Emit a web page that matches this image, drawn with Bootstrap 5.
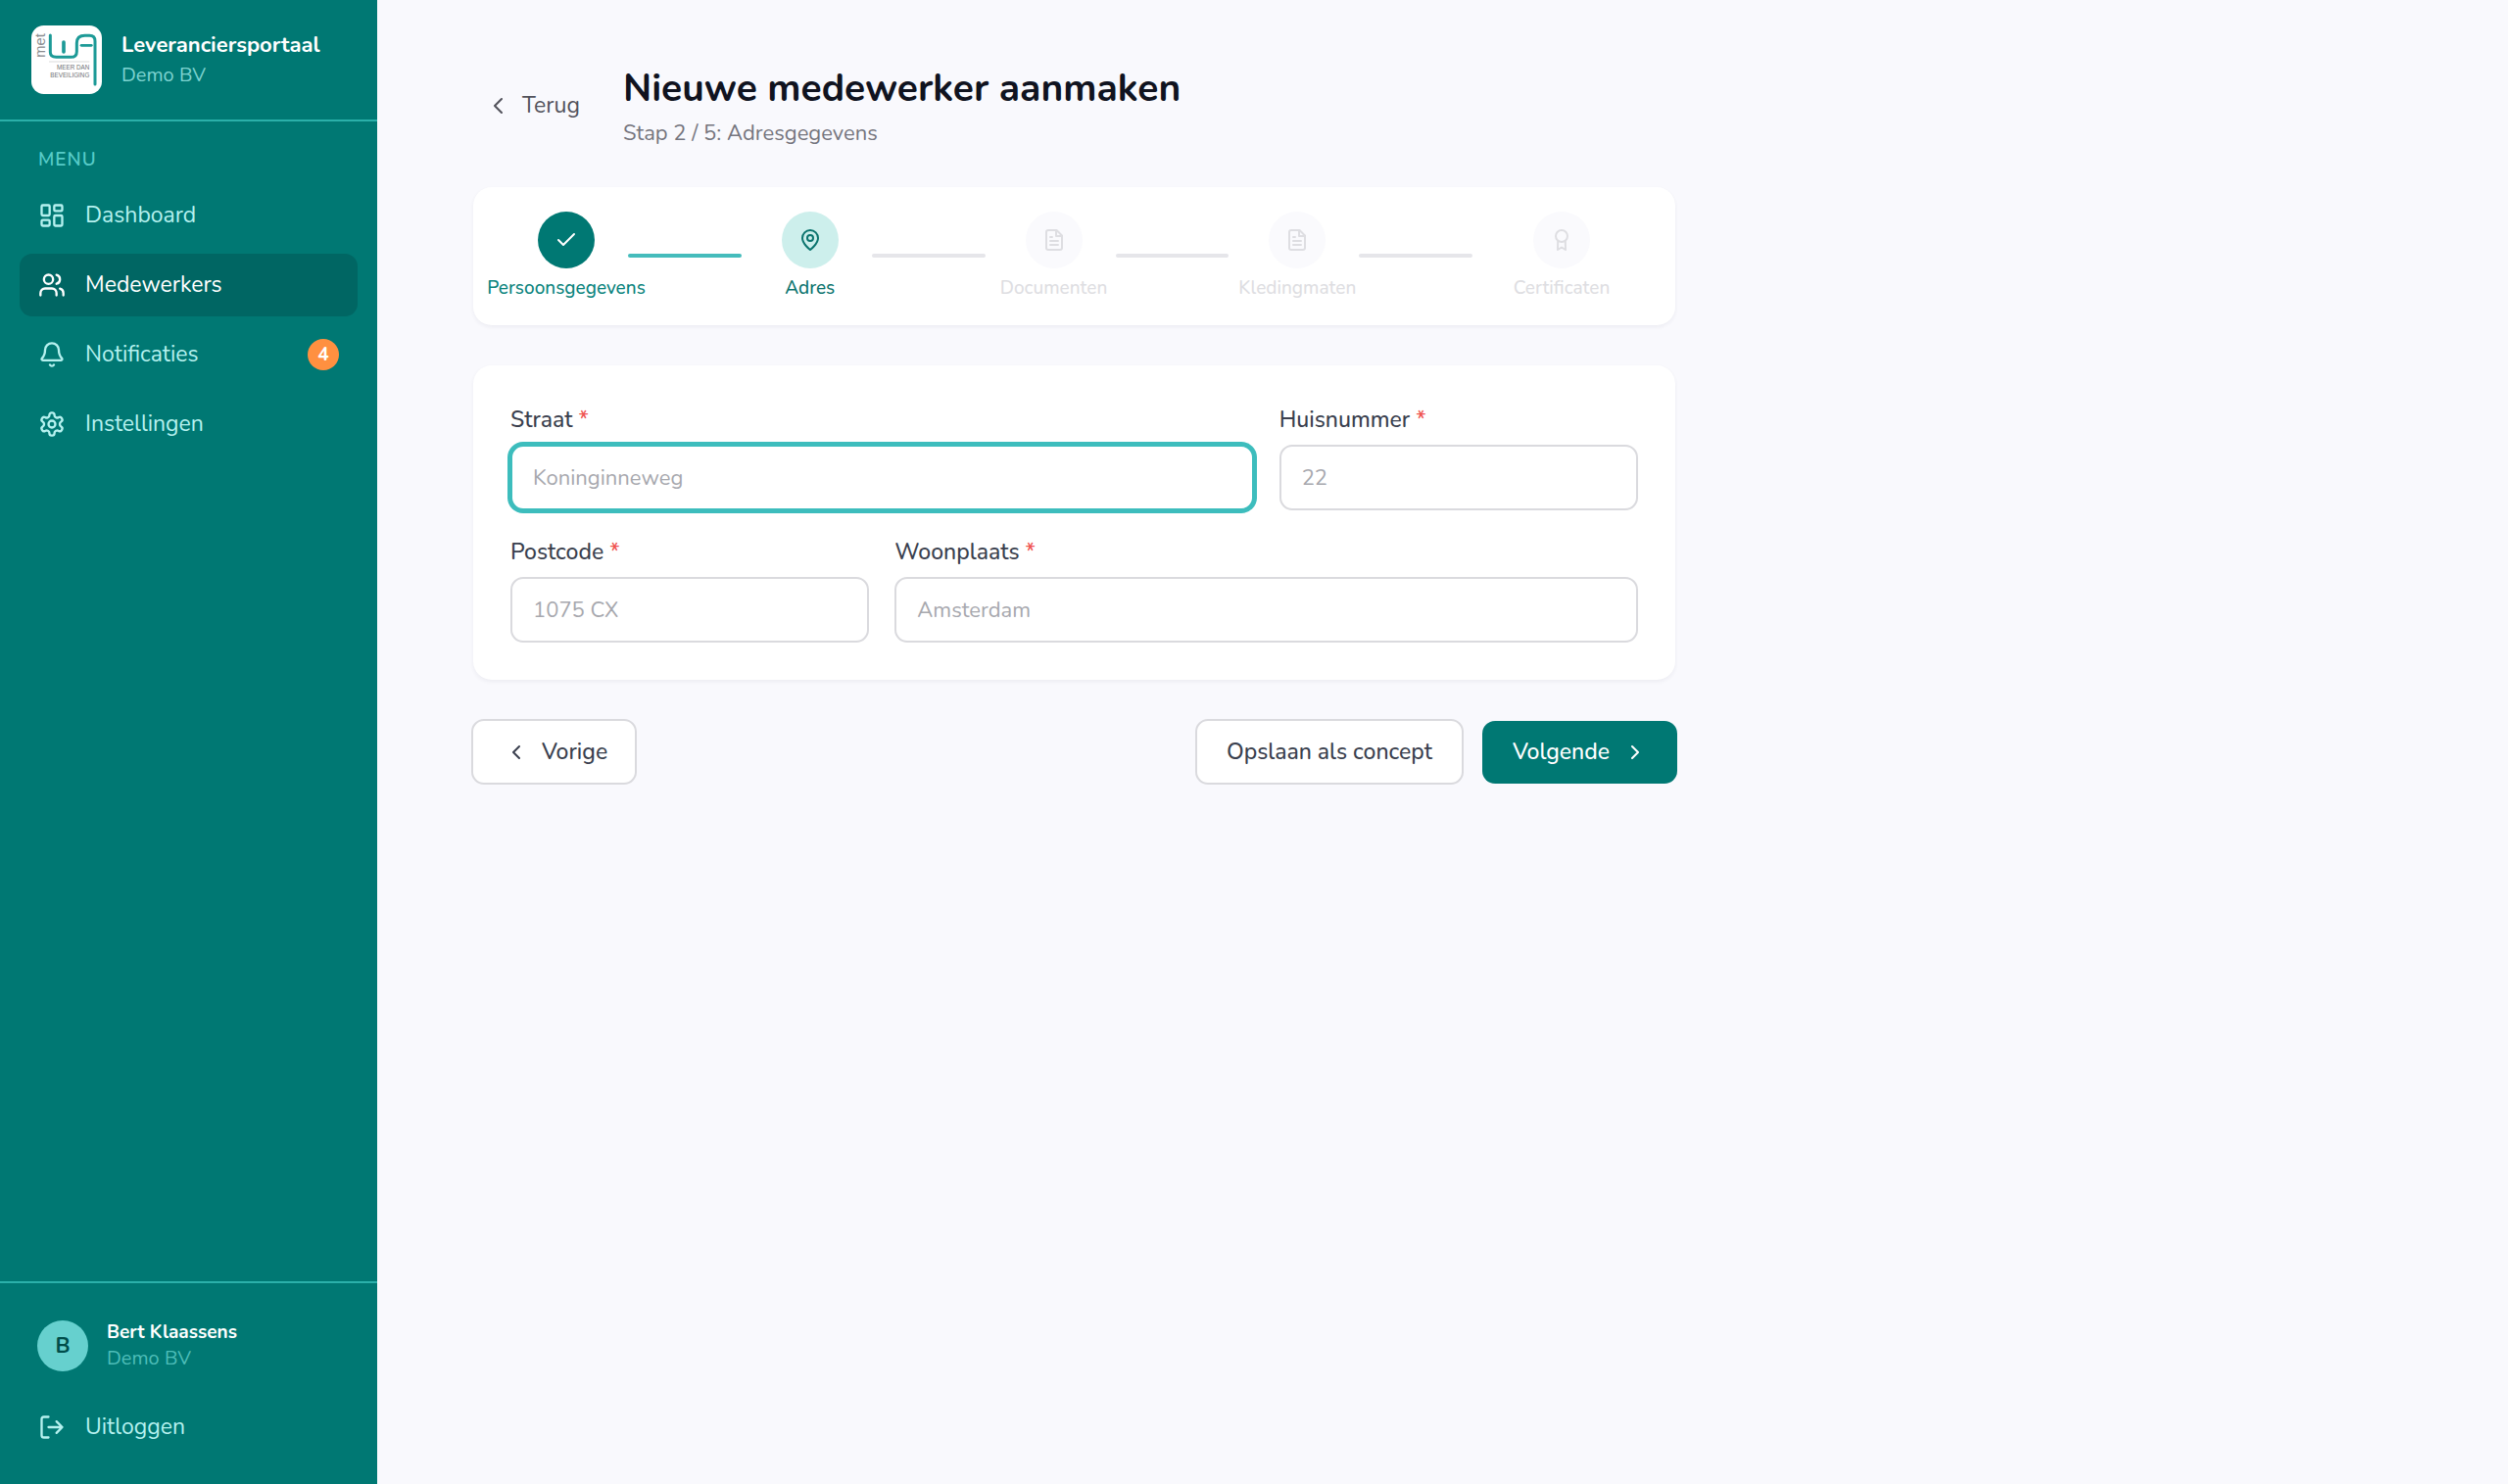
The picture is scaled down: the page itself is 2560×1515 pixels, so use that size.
<!DOCTYPE html>
<html lang="nl">
<head>
<meta charset="utf-8">
<meta name="viewport" content="width=device-width, initial-scale=1">
<title>Nieuwe medewerker aanmaken - Leveranciersportaal</title>
<link href="https://cdn.jsdelivr.net/npm/bootstrap@5.3.0/dist/css/bootstrap.min.css" rel="stylesheet">
<style>
  :root { --teal: #007873; --teal-dark: #006663; --teal-line: #2bb0aa; --teal-bright: #3dbdbd; --mint: #b5f1ef; --ink: #3a3f4e; }
  body { font-family: Nunito, Lato, "Open Sans", sans-serif; font-size: 22px; line-height: 32px; color: var(--ink); background: #f9f9fd; }
  .ico { fill: none; stroke: currentColor; stroke-width: 2; stroke-linecap: round; stroke-linejoin: round; flex: none; width: 28px; height: 28px; }
  .ico-sm { width: 24px; height: 24px; }

  .sidebar { width: 385px; flex: none; background: var(--teal); color: var(--mint); }
  .brand { padding: 26px 32px; gap: 20px; height: 124px; border-bottom: 2px solid var(--teal-line); align-items: flex-start; }
  .brand-logo { width: 72px; height: 70px; flex: none; }
  .brand-name { font-weight: 700; color: #fff; line-height: 33px; padding-top: 4px; }
  .small-text { font-size: 20px; line-height: 28px; }
  .soft { color: #7dd3d0; }
  .softer { color: #4dbdb8; }
  .menu-title { font-size: 19px; line-height: 28px; letter-spacing: 1px; color: #57cbc8; margin: 25px 19px 11px; font-weight: 600; }
  .side-nav { padding: 0 20px; }
  .side-list { gap: 7px; }
  .side-link { display: flex; align-items: center; gap: 20px; height: 64px; padding: 0 19px; border: 0; border-radius: 13px; color: var(--mint); background: none; text-decoration: none; width: 100%; font-size: 23px; }
  .side-link.active { background: var(--teal-dark); color: #fff; }
  .count { width: 32px; height: 32px; border-radius: 50%; background: #ff9040; color: #fff; font-size: 19px; font-weight: 700; line-height: 32px; text-align: center; }
  .account { border-top: 2px solid var(--teal-line); padding: 37px 20px 26px; }
  .avatar-dot { width: 52px; height: 52px; border-radius: 50%; background: #66d0ce; color: #004d4a; font-weight: 700; line-height: 52px; text-align: center; }
  .account-name { color: #fff; font-weight: 700; line-height: 26px; font-size: 19px; }
  .account-row { gap: 19px; padding: 0 18px; margin-bottom: 24px; }

  .page { padding: 65px 96px; }
  .page-inner { max-width: 1231px; }
  .page-title { font-size: 39px; line-height: 52px; font-weight: 700; color: #10131f; margin: 0; }
  .page-sub { color: #75757e; margin: 0; line-height: 36px; padding-top: 1px; }
  .page-head { gap: 44px; margin-bottom: 37px; }
  .back-link { color: #52525b; text-decoration: none; font-size: 23px; gap: 12px; padding-left: 16px; margin-bottom: 4px; }
  .panel { background: #fff; border-radius: 19px; box-shadow: 0 2px 4px rgba(30, 30, 60, .06); margin: 0 2px 41px; }

  .stepper { padding: 25px 32px 26px; }
  .step-item { flex: 1 1 0; }
  .step-item:last-child { flex: 0 0 168px; justify-content: center; }
  .step-box { width: 126px; flex: none; }
  .step-dot { width: 58px; height: 58px; border-radius: 50%; background: #fafafd; color: #dedee2; }
  .step-name { font-size: 19px; line-height: 24px; margin-top: 8px; white-space: nowrap; color: #dedee2; font-weight: 500; }
  .step-bar { height: 4px; border-radius: 2px; background: #e6e6ea; margin-right: 7px; }
  .done .step-dot { background: var(--teal); color: #fff; }
  .done .step-name { color: #0b847d; }
  .done .step-bar { background: #45bcbc; }
  .current .step-dot { background: #cdefec; color: #0b746e; }
  .current .step-name { color: #0b746e; }

  .address { padding: 38px; display: grid; grid-template-columns: repeat(3, 1fr); gap: 25px 26px; margin-bottom: 40px; }
  .wide { grid-column: span 2; }
  .address label { display: block; font-size: 23px; line-height: 36px; margin-bottom: 7px; font-weight: 500; }
  .req { color: #ef5350; }
  .address .form-control { height: 67px; border: 2px solid #dadade; border-radius: 13px; padding: 0 21px; font-size: 22px; color: var(--ink); background: #fff; }
  .address .form-control::placeholder { color: #a7a8ae; opacity: 1; }
  .address .form-control.focused, .address .form-control:focus { border-color: var(--teal-bright); box-shadow: 0 0 0 3px var(--teal-bright); }

  .act { --bs-btn-font-size: 23px; --bs-btn-line-height: 32px; --bs-btn-border-radius: 13px; --bs-btn-font-weight: 500; display: inline-flex; align-items: center; gap: 14px; }
  .act-plain { --bs-btn-bg: #fff; --bs-btn-border-color: #dadade; --bs-btn-color: var(--ink); --bs-btn-border-width: 2px; padding: 0 30px; height: 67px; }
  .act-back { padding: 0 28px 0 32px; }
  .act-main { --bs-btn-bg: var(--teal); --bs-btn-color: #fff; --bs-btn-border-width: 0; padding: 0 31px; height: 64px; }
  .act-group { gap: 19px; }
</style>
<script src="https://cdn.jsdelivr.net/npm/bootstrap@5.3.0/dist/js/bootstrap.bundle.min.js"></script>
</head>
<body>
<div class="d-flex min-vh-100">
  <aside class="sidebar d-flex flex-column">
    <div class="brand d-flex">
      <svg class="brand-logo" viewBox="0 0 216 210" role="img" aria-label="met WA, meer dan beveiliging">
        <rect width="216" height="210" rx="38" fill="#fff"/>
        <g fill="none" stroke="#1d9a97" stroke-linecap="round">
          <path stroke-width="9" d="M58 30V82Q58 97 76 97H121Q139 97 139 80V54Q139 31 164 31H178Q195 31 195 48V180"/>
          <path stroke-width="11" d="M99 51V81"/>
          <path stroke-width="8" d="M153 61H184"/>
        </g>
        <path d="M54 111H178" stroke="#c9c9c9" stroke-width="2"/>
        <g fill="#6f7275" font-family="Liberation Sans, sans-serif">
          <text x="178" y="136" font-size="19" text-anchor="end">MEER DAN</text>
          <text x="178" y="158" font-size="19" text-anchor="end">BEVEILIGING</text>
          <text transform="translate(43 98) rotate(-90)" font-size="44" fill="#8a8d90">met</text>
        </g>
      </svg>
      <div>
        <div class="brand-name">Leveranciersportaal</div>
        <div class="small-text soft">Demo BV</div>
      </div>
    </div>

    <nav class="side-nav flex-grow-1" aria-label="Menu">
      <div class="menu-title">MENU</div>
      <ul class="side-list list-unstyled d-flex flex-column mb-0">
        <li><a class="side-link" href="#"><svg class="ico" viewBox="0 0 24 24"><rect x="3" y="3" width="7" height="9" rx="1"/><rect x="14" y="3" width="7" height="5" rx="1"/><rect x="14" y="12" width="7" height="9" rx="1"/><rect x="3" y="16" width="7" height="5" rx="1"/></svg>Dashboard</a></li>
        <li><a class="side-link active" href="#" aria-current="page"><svg class="ico" viewBox="0 0 24 24"><path d="M16 21v-2a4 4 0 0 0-4-4H6a4 4 0 0 0-4 4v2"/><circle cx="9" cy="7" r="4"/><path d="M22 21v-2a4 4 0 0 0-3-3.87M16 3.13a4 4 0 0 1 0 7.75"/></svg>Medewerkers</a></li>
        <li><a class="side-link" href="#"><svg class="ico" viewBox="0 0 24 24"><path d="M10.27 21a2 2 0 0 0 3.46 0"/><path d="M3.26 15.33A1 1 0 0 0 4 17h16a1 1 0 0 0 .74-1.67C19.41 13.96 18 12.5 18 8A6 6 0 0 0 6 8c0 4.5-1.41 5.96-2.74 7.33"/></svg>Notificaties<span class="count ms-auto">4</span></a></li>
        <li><a class="side-link" href="#"><svg class="ico" viewBox="0 0 24 24"><path d="M12.22 2h-.44a2 2 0 0 0-2 2v.18a2 2 0 0 1-1 1.73l-.43.25a2 2 0 0 1-2 0l-.15-.08a2 2 0 0 0-2.73.73l-.22.38a2 2 0 0 0 .73 2.73l.15.1a2 2 0 0 1 1 1.72v.51a2 2 0 0 1-1 1.74l-.15.09a2 2 0 0 0-.73 2.73l.22.38a2 2 0 0 0 2.73.73l.15-.08a2 2 0 0 1 2 0l.43.25a2 2 0 0 1 1 1.73V20a2 2 0 0 0 2 2h.44a2 2 0 0 0 2-2v-.18a2 2 0 0 1 1-1.73l.43-.25a2 2 0 0 1 2 0l.15.08a2 2 0 0 0 2.73-.73l.22-.39a2 2 0 0 0-.73-2.73l-.15-.08a2 2 0 0 1-1-1.74v-.5a2 2 0 0 1 1-1.74l.15-.09a2 2 0 0 0 .73-2.73l-.22-.38a2 2 0 0 0-2.73-.73l-.15.08a2 2 0 0 1-2 0l-.43-.25a2 2 0 0 1-1-1.73V4a2 2 0 0 0-2-2z"/><circle cx="12" cy="12" r="3"/></svg>Instellingen</a></li>
      </ul>
    </nav>

    <div class="account">
      <div class="account-row d-flex align-items-center">
        <div class="avatar-dot">B</div>
        <div class="small-text">
          <div class="account-name">Bert Klaassens</div>
          <div class="softer">Demo BV</div>
        </div>
      </div>
      <button class="side-link" type="button"><svg class="ico" viewBox="0 0 24 24"><path d="M9 21H5a2 2 0 0 1-2-2V5a2 2 0 0 1 2-2h4M16 17l5-5-5-5M21 12H9"/></svg>Uitloggen</button>
    </div>
  </aside>

  <main class="page flex-grow-1">
    <div class="page-inner">
      <header class="page-head d-flex align-items-center">
        <a class="back-link d-flex align-items-center" href="#"><svg class="ico ico-sm" viewBox="0 0 24 24"><path d="M15 19l-7-7 7-7"/></svg>Terug</a>
        <div>
          <h1 class="page-title">Nieuwe medewerker aanmaken</h1>
          <p class="page-sub">Stap 2 / 5: Adresgegevens</p>
        </div>
      </header>

      <ol class="panel stepper list-unstyled d-flex">
        <li class="step-item done d-flex align-items-center">
          <div class="step-box d-flex flex-column align-items-center">
            <span class="step-dot d-flex align-items-center justify-content-center"><svg class="ico ico-sm" viewBox="0 0 24 24"><path d="M20 6L9 17l-5-5"/></svg></span>
            <span class="step-name">Persoonsgegevens</span>
          </div>
          <span class="step-bar flex-grow-1"></span>
        </li>
        <li class="step-item current d-flex align-items-center" aria-current="step">
          <div class="step-box d-flex flex-column align-items-center">
            <span class="step-dot d-flex align-items-center justify-content-center"><svg class="ico ico-sm" viewBox="0 0 24 24"><path d="M20 10c0 6-8 12-8 12s-8-6-8-12a8 8 0 0 1 16 0z"/><circle cx="12" cy="10" r="3"/></svg></span>
            <span class="step-name">Adres</span>
          </div>
          <span class="step-bar flex-grow-1"></span>
        </li>
        <li class="step-item d-flex align-items-center">
          <div class="step-box d-flex flex-column align-items-center">
            <span class="step-dot d-flex align-items-center justify-content-center"><svg class="ico ico-sm" viewBox="0 0 24 24"><path d="M14.5 2H6a2 2 0 0 0-2 2v16a2 2 0 0 0 2 2h12a2 2 0 0 0 2-2V7.5zM14 2v6h6M16 13H8M16 17H8M10 9H8"/></svg></span>
            <span class="step-name">Documenten</span>
          </div>
          <span class="step-bar flex-grow-1"></span>
        </li>
        <li class="step-item d-flex align-items-center">
          <div class="step-box d-flex flex-column align-items-center">
            <span class="step-dot d-flex align-items-center justify-content-center"><svg class="ico ico-sm" viewBox="0 0 24 24"><path d="M14.5 2H6a2 2 0 0 0-2 2v16a2 2 0 0 0 2 2h12a2 2 0 0 0 2-2V7.5zM14 2v6h6M16 13H8M16 17H8M10 9H8"/></svg></span>
            <span class="step-name">Kledingmaten</span>
          </div>
          <span class="step-bar flex-grow-1"></span>
        </li>
        <li class="step-item d-flex align-items-center">
          <div class="step-box d-flex flex-column align-items-center">
            <span class="step-dot d-flex align-items-center justify-content-center"><svg class="ico ico-sm" viewBox="0 0 24 24"><circle cx="12" cy="8" r="6"/><path d="M8.2 13L8 22l4-2.5 4 2.5-.2-9"/></svg></span>
            <span class="step-name">Certificaten</span>
          </div>
        </li>
      </ol>

      <form id="adres" class="panel address">
        <div class="wide">
          <label for="straat">Straat <span class="req">*</span></label>
          <input class="form-control focused" id="straat" type="text" placeholder="Koninginneweg">
        </div>
        <div>
          <label for="huisnummer">Huisnummer <span class="req">*</span></label>
          <input class="form-control" id="huisnummer" type="text" placeholder="22">
        </div>
        <div>
          <label for="postcode">Postcode <span class="req">*</span></label>
          <input class="form-control" id="postcode" type="text" placeholder="1075 CX">
        </div>
        <div class="wide">
          <label for="woonplaats">Woonplaats <span class="req">*</span></label>
          <input class="form-control" id="woonplaats" type="text" placeholder="Amsterdam">
        </div>
      </form>

      <div class="d-flex align-items-center justify-content-between">
        <button class="btn act act-plain act-back" type="button"><svg class="ico ico-sm" viewBox="0 0 24 24"><path d="M15 18l-6-6 6-6"/></svg>Vorige</button>
        <div class="act-group d-flex align-items-center">
          <button class="btn act act-plain" type="submit" form="adres">Opslaan als concept</button>
          <button class="btn act act-main" type="button">Volgende<svg class="ico ico-sm" viewBox="0 0 24 24"><path d="M9 18l6-6-6-6"/></svg></button>
        </div>
      </div>
    </div>
  </main>
</div>
</body>
</html>
